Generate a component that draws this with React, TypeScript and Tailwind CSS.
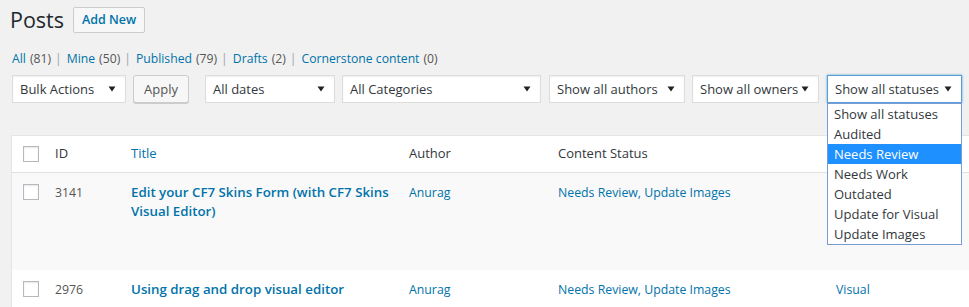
import React from "react";

const FONT = "font-['Open_Sans',sans-serif]";

const VIEWS = [
  { label: "All", count: 81 },
  { label: "Mine", count: 50 },
  { label: "Published", count: 79 },
  { label: "Drafts", count: 2 },
  { label: "Cornerstone content", count: 0 },
];

const STATUSES = [
  "Show all statuses",
  "Audited",
  "Needs Review",
  "Needs Work",
  "Outdated",
  "Update for Visual",
  "Update Images",
];

function Arrow() {
  return (
    <svg width="8" height="6" viewBox="0 0 8 6" className="shrink-0">
      <path d="M0.5 0.5 L7.5 0.5 L4 5.5 Z" fill="#222" />
    </svg>
  );
}

function Select({ label, className, focused }: { label: string; className: string; focused?: boolean }) {
  return (
    <div
      className={
        "h-[28px] flex items-center justify-between pl-[7px] pr-[9px] bg-white text-[13px] text-[#32373c] border " +
        (focused
          ? "border-[#5b9dd9] shadow-[0_0_2px_rgba(30,140,190,0.8)] "
          : "border-[#ddd] shadow-[inset_0_1px_2px_rgba(0,0,0,0.07)] ") +
        className
      }
    >
      <span className="whitespace-nowrap pt-[2px]">{label}</span>
      <Arrow />
    </div>
  );
}

function Checkbox() {
  return <div className="w-[16px] h-[16px] border border-[#b4b9be] bg-white shadow-[inset_0_1px_2px_rgba(0,0,0,0.1)]" />;
}

const COLS = "grid grid-cols-[33px_76px_278px_149px_278px_1fr]";

export default function App() {
  return (
    <div className={`relative h-[307px] w-[969px] overflow-hidden bg-[#f1f1f1] ${FONT}`}>
      {/* Heading */}
      <div className="flex items-center gap-[9px] pl-[10px] pt-[7px]">
        <h1 className="text-[21.5px] leading-[26px] text-[#23282d]">Posts</h1>
        <button className="h-[26px] w-[72px] border border-[#ccc] rounded-[2px] bg-[#f7f7f7] text-[12.5px] font-semibold text-[#0073aa]">
          Add New
        </button>
      </div>

      {/* Views */}
      <div className="flex items-center pl-[12px] mt-[17px] h-[18px] text-[12.2px] text-[#555]">
        {VIEWS.map((v, i) => (
          <span key={v.label} className="flex items-center whitespace-nowrap">
            <span className="text-[#0073aa]">{v.label}</span>
            <span className="ml-[4px]">({v.count})</span>
            {i < VIEWS.length - 1 && <span className="ml-[4px] mr-[5px] text-[#a0a5aa]">|</span>}
          </span>
        ))}
      </div>

      {/* Filters */}
      <div className="flex items-center pl-[12px] mt-[7px] gap-[7px]">
        <Select label="Bulk Actions" className="w-[114px]" />
        <button className="h-[28px] w-[56px] border border-[#ccc] rounded-[3px] bg-[#f7f7f7] shadow-[0_1px_0_#ccc] text-[13px] text-[#555] pt-[1px]">
          Apply
        </button>
        <Select label="All dates" className="w-[130px] ml-[9px]" />
        <Select label="All Categories" className="w-[199px]" />
        <Select label="Show all authors" className="w-[136px] ml-[1px]" />
        <Select label="Show all owners" className="w-[127px]" />
        <Select label="Show all statuses" className="w-[135px] ml-[1px]" focused />
      </div>

      {/* Table */}
      <div className="ml-[11px] mt-[32px] w-[970px] border-l border-t border-[#e5e5e5] bg-white text-[12.3px]">
        <div className={`${COLS} h-[37px] items-center border-b border-[#e1e1e1] text-[#32373c] text-[13px]`}>
          <div className="pl-[11px]"><Checkbox /></div>
          <div className="pl-[10px]">ID</div>
          <div className="pl-[10px] text-[#0073aa]">Title</div>
          <div className="pl-[10px]">Author</div>
          <div className="pl-[10px]">Content Status</div>
          <div className="pl-[10px]"></div>
        </div>

        <div className={`${COLS} h-[97px] items-start bg-[#f9f9f9] pt-[10px]`}>
          <div className="pl-[11px] pt-[1px]"><Checkbox /></div>
          <div className="pl-[10px] text-[#555] leading-[19px]">3141</div>
          <div className="pl-[10px] text-[13.3px] font-semibold text-[#0073aa] leading-[19px]">
            Edit your CF7 Skins Form (with CF7 Skins Visual Editor)
          </div>
          <div className="pl-[10px] text-[#0073aa] leading-[19px]">Anurag</div>
          <div className="pl-[10px] text-[#0073aa] leading-[19px]">Needs Review, Update Images</div>
          <div className="pl-[10px]"></div>
        </div>

        <div className={`${COLS} h-[40px] items-start pt-[10px]`}>
          <div className="pl-[11px] pt-[1px]"><Checkbox /></div>
          <div className="pl-[10px] text-[#555] leading-[19px]">2976</div>
          <div className="pl-[10px] text-[13.3px] font-semibold text-[#0073aa] leading-[19px]">
            Using drag and drop visual editor
          </div>
          <div className="pl-[10px] text-[#0073aa] leading-[19px]">Anurag</div>
          <div className="pl-[10px] text-[#0073aa] leading-[19px]">Needs Review, Update Images</div>
          <div className="pl-[10px] text-[#0073aa] leading-[19px]">Visual</div>
        </div>
      </div>

      {/* Open status dropdown */}
      <ul className="absolute left-[827px] top-[103px] w-[135px] border border-[#7a9cd3] bg-white text-[13px] text-[#32373c]">
        {STATUSES.map((s) => (
          <li
            key={s}
            className={
              "h-[20px] leading-[20px] pl-[6px] whitespace-nowrap " +
              (s === "Needs Review" ? "bg-[#1e90ff] text-white" : "")
            }
          >
            {s}
          </li>
        ))}
      </ul>
    </div>
  );
}
